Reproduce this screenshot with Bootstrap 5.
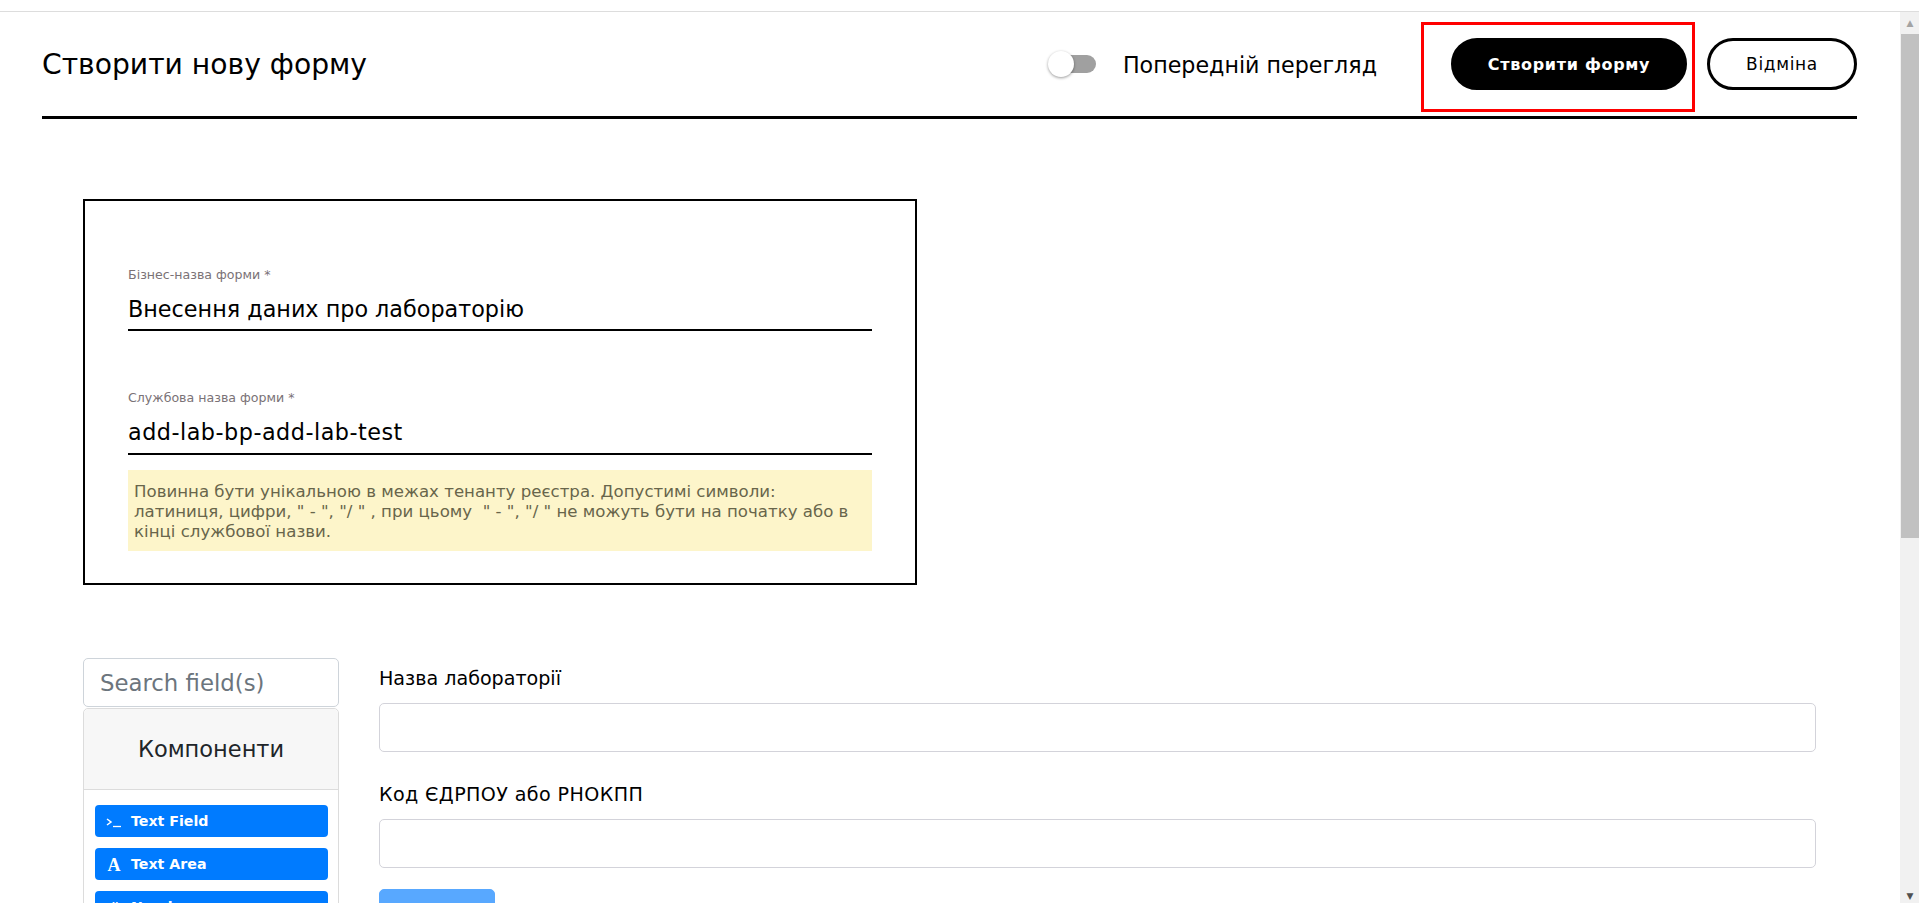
<!DOCTYPE html>
<html lang="uk">
<head>
<meta charset="utf-8">
<title>Створити нову форму</title>
<link href="https://cdn.jsdelivr.net/npm/bootstrap@5.3.0/dist/css/bootstrap.min.css" rel="stylesheet">
<style>
html,body{height:903px;overflow:hidden;background:#fff}
body{font-family:"DejaVu Sans",Inter,sans-serif;color:#000}
.topstrip{height:12px;border-bottom:1px solid #ddd}
.shell{height:891px}
.scroller{width:1900px;overflow:hidden;padding:0 43px 0 42px}
.fakebar{width:19px;background:#f1f1f1;padding-left:1px}
.fakebar-up{height:22px;color:#a3a3a3;font-size:9px;line-height:22px}
.fakebar-thumb{height:504px;background:#c1c1c1}
.fakebar-down{color:#505050;font-size:9px;line-height:14px}
.pagehead{height:107px;border-bottom:3px solid #000;padding-top:10px}
.pagetitle{font-size:28.2px;font-weight:400;margin:0;line-height:38px;padding-top:24px}
.togglewrap{height:52px;margin-top:16px}
.toggle-track{width:46px;height:18px;background:#a0a0a0;border-radius:9px}
.toggle-thumb{width:26px;height:26px;background:#fff;border-radius:50%;box-shadow:0 1px 3px rgba(0,0,0,.4);top:-4px;left:-2px}
.previewlabel{font-size:22.2px;margin-left:27px;margin-right:44px;padding-top:3px}
.redbox{border:3px solid #f00;width:274px;height:90px;padding:13px 5px 0 27px;margin-right:12px}
.pillbtn{height:52px;border-radius:26px;font-size:16px;border:3px solid #000;padding:2px 0 0}
.pillbtn-dark{width:236px;background:#000;color:#fff;font-weight:700;letter-spacing:.7px}
.pillbtn-light{width:150px;background:#fff;color:#000;margin-top:16px;font-size:17px;letter-spacing:.65px}
.namecard{width:834px;height:386px;margin:80px 0 73px 41px;border:2px solid #000;padding:65px 43px 0}
.fieldcap{font-size:12.6px;color:#7a7276;line-height:18px}
.fieldval{font-size:22.3px;line-height:34px;border-bottom:2px solid #000;height:47px;padding-top:8px}
.secondfield{margin-top:58px}
.tallval{height:48px;letter-spacing:.5px}
.hintbox{background:#fdf5ca;color:#68654b;font-size:16.6px;line-height:20px;padding:12px 6px 8px;margin-top:15px;height:81px}
.leftcol{width:256px;margin-left:41px;margin-right:40px;flex:none}
.searchbox.form-control{height:49px;font-size:22.8px;padding:0 16px;border-color:#ced4da;border-radius:5px;color:#6c757d}
.searchbox::placeholder{color:#6c757d;opacity:1}
.palette{border:1px solid #dcdcdc;border-radius:5px;margin-top:1px;padding:0}
.palette-head{height:81px;background:#f7f7f7;border-bottom:1px solid #dcdcdc;font-size:22.5px;color:#212529;line-height:80px;text-align:center;border-radius:5px 5px 0 0}
.palette-body{padding:15px 10px 0 11px}
.palitem{height:32px;background:#007bff;color:#fff;border-radius:4px;font-size:14.2px;font-weight:700;margin-bottom:11px;padding:1px 0 0 11px;gap:9px}
.palicon{width:16px;flex:none}
.rightcol{width:1437px;padding-top:8px}
.rlabel{font-size:19.1px;line-height:26px;margin-bottom:11px;display:block}
.rlabel-wide{letter-spacing:.4px}
.rinput.form-control{height:49px;border-color:#d3d3da;border-radius:5px}
.rgroup{margin-bottom:30px}
.rgroup + .rgroup{margin-bottom:21px}
.submitstub{width:116px;height:49px;--bs-btn-disabled-bg:#007bff;--bs-btn-disabled-border-color:#007bff;border-radius:5px}
.contentrow{height:300px}
</style>
</head>
<body>
<div class="topstrip"></div>
<div class="shell d-flex">
  <main class="scroller">
    <header class="pagehead d-flex align-items-start">
      <h1 class="pagetitle flex-grow-1">Створити нову форму</h1>
      <div class="togglewrap d-flex align-items-center">
        <span class="toggle-track position-relative d-inline-block"><span class="toggle-thumb position-absolute"></span></span>
        <span class="previewlabel">Попередній перегляд</span>
      </div>
      <div class="redbox"><button class="btn pillbtn pillbtn-dark">Створити форму</button></div>
      <button class="btn pillbtn pillbtn-light">Відміна</button>
    </header>
    <section class="namecard">
      <div class="fieldcap">Бізнес-назва форми *</div>
      <div class="fieldval">Внесення даних про лабораторію</div>
      <div class="fieldcap secondfield">Службова назва форми *</div>
      <div class="fieldval tallval">add-lab-bp-add-lab-test</div>
      <div class="hintbox">Повинна бути унікальною в межах тенанту реєстра. Допустимі символи: латиниця, цифри, " - ", "/ " , при цьому&nbsp; " - ", "/ " не можуть бути на початку або в кінці службової назви.</div>
    </section>
    <div class="d-flex contentrow">
      <aside class="leftcol">
        <input class="form-control searchbox" placeholder="Search field(s)">
        <div class="card palette">
          <div class="palette-head">Компоненти</div>
          <div class="palette-body">
            <div class="palitem d-flex align-items-center"><svg class="palicon" width="16" height="12" viewBox="0 0 16 12"><path d="M1 3l4 3-4 3" fill="none" stroke="#fff" stroke-width="1.5"/><path d="M7 10.5h8" stroke="#fff" stroke-width="1.3"/></svg>Text Field</div>
            <div class="palitem d-flex align-items-center"><span class="palicon text-center" style="font-family:'Liberation Serif',serif;font-weight:700;font-size:18px;line-height:18px">A</span>Text Area</div>
            <div class="palitem d-flex align-items-center"><span class="palicon text-center">#</span>Number</div>
          </div>
        </div>
      </aside>
      <div class="rightcol">
        <div class="rgroup"><label class="rlabel">Назва лабораторії</label><input class="form-control rinput"></div>
        <div class="rgroup"><label class="rlabel rlabel-wide">Код ЄДРПОУ або РНОКПП</label><input class="form-control rinput"></div>
        <button class="btn btn-primary submitstub" disabled></button>
      </div>
    </div>
  </main>
  <div class="fakebar d-flex flex-column align-items-stretch">
    <div class="fakebar-up text-center">▲</div>
    <div class="fakebar-thumb"></div>
    <div class="flex-grow-1"></div>
    <div class="fakebar-down text-center">▼</div>
  </div>
</div>
<script src="https://cdn.jsdelivr.net/npm/bootstrap@5.3.0/dist/js/bootstrap.bundle.min.js"></script>
</body>
</html>
